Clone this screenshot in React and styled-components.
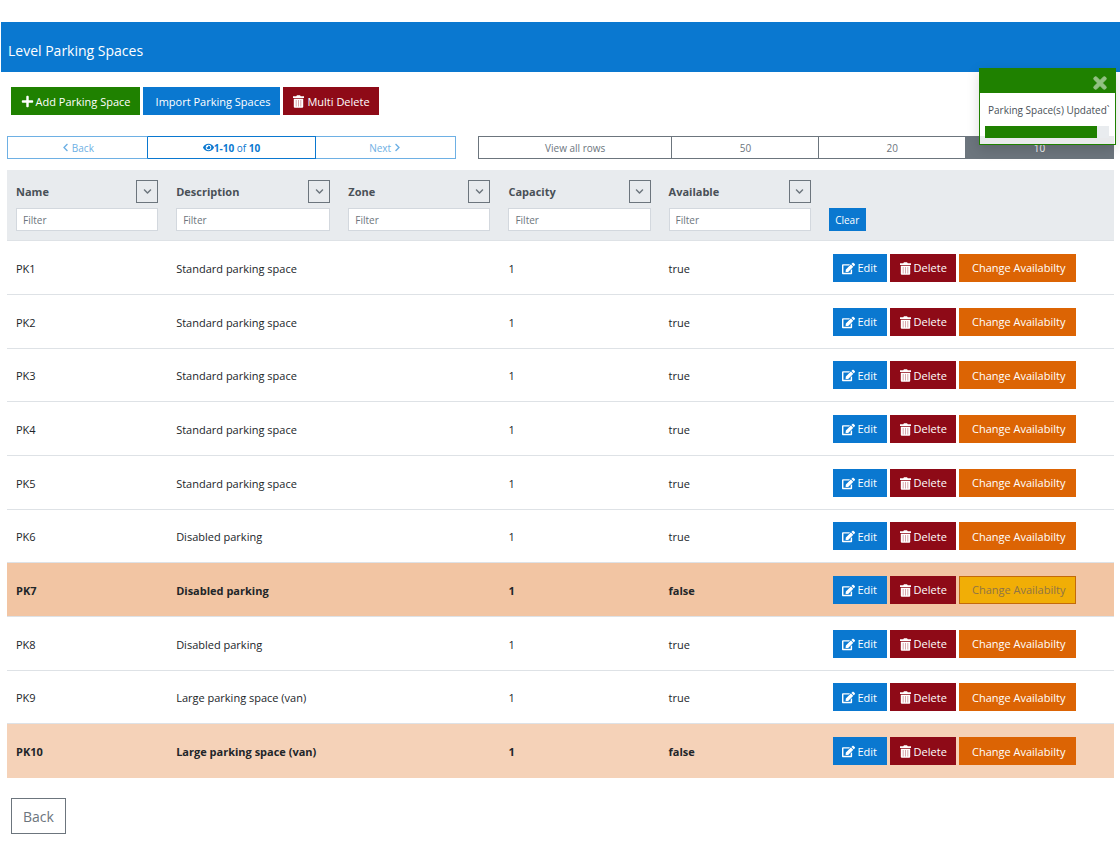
import React, { useState } from 'react';
import styled, { createGlobalStyle, css } from 'styled-components';
import {
	FaPlus,
	FaEdit,
	FaEye,
	FaChevronLeft,
	FaChevronRight,
	FaChevronDown,
	FaTimes,
} from 'react-icons/fa';

const colors = {
	blue: '#0a78d0',
	lightBlue: '#6eb0e4',
	green: '#1f8100',
	red: '#8e0a17',
	orange: '#dc6404',
	amber: '#f1ae06',
	grey: '#6c757d',
	header: '#e8ebee',
	border: '#dee2e6',
	text: '#212529',
};

const GlobalStyle = createGlobalStyle`
	*, *::before, *::after {
		box-sizing: border-box;
	}
	body {
		margin: 0;
		background: white;
		color: ${colors.text};
		font-family: 'Open Sans', 'Noto Sans', sans-serif;
		font-size: 11px;
		line-height: 16px;
	}
	button, input {
		font-family: inherit;
		margin: 0;
	}
`;

const Page = styled.div`
	padding-top: 22px;
`;

const TitleBar = styled.header`
	height: 50px;
	margin-left: 1px;
	padding: 19px 7px 0;
	background: ${colors.blue};
	color: white;
`;

const Title = styled.h1`
	margin: 0;
	font-size: 14px;
	line-height: 20px;
	font-weight: 400;
`;

const Content = styled.main`
	padding: 15px 6px 0 7px;
`;

const ButtonRow = styled.div`
	display: flex;
	gap: 3px;
	padding-left: ${({ $indent }) => $indent}px;
`;

const Button = styled.button`
	display: flex;
	align-items: center;
	justify-content: center;
	gap: 2px;
	width: ${({ $width }) => $width}px;
	height: 28px;
	padding: ${({ $labelOnly }) => ($labelOnly ? '1px 0 0 3px' : '1px 0 0')};
	border: 1px solid ${({ $color }) => $color};
	background: ${({ $color }) => $color};
	color: white;
	font-size: 11px;
	line-height: 16px;
	white-space: nowrap;
	svg {
		flex: none;
		font-size: 13px;
	}
	&:disabled {
		border-color: #c46a0a;
		background: ${colors.amber};
		color: #8f7446;
	}
`;

const Toolbar = styled.div`
	display: flex;
	gap: 22px;
	margin: 21px 0 11px;
`;

const Group = styled.div`
	display: flex;
	flex: ${({ $grow }) => $grow} 1 0;
`;

const GroupButton = styled.button`
	display: flex;
	align-items: center;
	justify-content: center;
	gap: ${({ $gap }) => $gap || 0}px;
	flex: ${({ $grow }) => $grow} 1 0;
	height: 23px;
	padding: 0;
	border: 1px solid ${colors.grey};
	background: white;
	color: ${colors.grey};
	font-size: 10px;
	line-height: 14px;
	& + & {
		border-left-width: 0;
	}
	${({ $active }) =>
		$active &&
		css`
			background: ${colors.grey};
			color: white;
		`}
`;

const PagerButton = styled(GroupButton)`
	border-color: ${colors.blue};
	color: ${colors.blue};
	white-space: pre;
	svg {
		font-size: 11px;
	}
	&:disabled {
		border-color: ${colors.lightBlue};
		color: ${colors.lightBlue};
		svg {
			font-size: 9px;
		}
	}
	&:first-child {
		border-right-color: ${colors.blue};
	}
`;

const Table = styled.table`
	width: 100%;
	table-layout: fixed;
	border-collapse: separate;
	border-spacing: 0;
`;

const HeadCell = styled.th`
	padding: 10px 9px 9px;
	border-bottom: 1px solid ${colors.border};
	background: ${colors.header};
	color: #495057;
	text-align: left;
	vertical-align: bottom;
	font-weight: 700;
`;

const HeadLabel = styled.div`
	display: flex;
	align-items: center;
	justify-content: space-between;
	margin-bottom: 5px;
`;

const SortButton = styled.button`
	display: flex;
	align-items: center;
	justify-content: center;
	width: 22px;
	height: 23px;
	padding: 0;
	border: 1px solid ${colors.grey};
	background: transparent;
	color: ${colors.grey};
	font-size: 9px;
`;

const Filter = styled.input`
	display: block;
	width: 100%;
	height: 23px;
	padding: 0 6px;
	border: 1px solid #d3d8de;
	border-radius: 0;
	background: white;
	color: ${colors.text};
	font-size: 10px;
	&::placeholder {
		color: ${colors.grey};
		opacity: 1;
	}
`;

const ClearButton = styled(Button)`
	height: 23px;
	padding: 0;
	font-size: 10px;
`;

const Row = styled.tr`
	height: 54px;
	&:nth-child(3n) {
		height: 53px;
	}
	${({ $unavailable }) =>
		$unavailable &&
		css`
			background: #f5d2b8;
			font-weight: 700;
		`}
	${({ $busy }) =>
		$busy &&
		css`
			background: #f2c5a3;
		`}
`;

const Cell = styled.td`
	padding: 2px 9px 0;
	border-bottom: 1px solid ${colors.border};
	vertical-align: middle;
	${Row}:last-child & {
		border-bottom: 0;
	}
`;

const ActionsCell = styled(Cell)`
	padding-top: 0;
`;

const Footer = styled.footer`
	padding: 20px 4px;
`;

const BackButton = styled.button`
	width: 55px;
	height: 36px;
	padding: 1px 0 0;
	border: 1px solid ${colors.grey};
	background: white;
	color: ${colors.grey};
	font-size: 14px;
	line-height: 20px;
`;

const Toast = styled.div`
	position: absolute;
	top: 68px;
	right: 4px;
	width: 137px;
	border: 1px solid ${colors.green};
	background: rgba(255, 255, 255, 0.85);
	box-shadow: 0 4px 12px rgba(0, 0, 0, 0.15);
`;

const ToastHeader = styled.div`
	display: flex;
	align-items: center;
	justify-content: flex-end;
	height: 24px;
	padding: 3px 6px 0;
	background: ${colors.green};
`;

const ToastClose = styled.button`
	display: flex;
	padding: 0;
	border: 0;
	background: none;
	color: #92c183;
	font-size: 18px;
	svg {
		stroke: currentColor;
		stroke-width: 30;
	}
`;

const ToastBody = styled.div`
	padding: 10px 6px 6px 5px;
	color: #495057;
	font-size: 10px;
	line-height: 14px;
	white-space: nowrap;
`;

const ToastText = styled.div`
	padding: 0 3px;
	margin-bottom: 9px;
`;

const Progress = styled.div`
	height: 12px;
	background: #e9ecef;
`;

const ProgressBar = styled.div`
	height: 100%;
	background: ${colors.green};
`;

const columns = [
	{ title: 'Name', width: 160 },
	{ title: 'Description', width: 172 },
	{ title: 'Zone', width: 160 },
	{ title: 'Capacity', width: 160 },
	{ title: 'Available', width: 160 },
];

const standard = 'Standard parking space';
const disabled = 'Disabled parking';
const large = 'Large parking space (van)';

const spaces = [
	{ name: 'PK1', description: standard, available: true },
	{ name: 'PK2', description: standard, available: true },
	{ name: 'PK3', description: standard, available: true },
	{ name: 'PK4', description: standard, available: true },
	{ name: 'PK5', description: standard, available: true },
	{ name: 'PK6', description: disabled, available: true },
	{ name: 'PK7', description: disabled, available: false, busy: true },
	{ name: 'PK8', description: disabled, available: true },
	{ name: 'PK9', description: large, available: true },
	{ name: 'PK10', description: large, available: false },
];

const TrashIcon = () => (
	<svg width="13" height="13" viewBox="0 0 13 13" aria-hidden="true">
		<path fill="currentColor" d="M1 1.2h3.2L5 .3h3l.8.9H12v1.9H1z" />
		<path fill="currentColor" d="M1.8 3.8h9.4v8q0 1-1 1H2.8q-1 0-1-1z" />
		<path
			stroke={colors.red}
			strokeOpacity="0.45"
			strokeWidth="0.8"
			d="M4.2 5v6.5M6.5 5v6.5M8.8 5v6.5"
		/>
	</svg>
);

const Notification = ({ progress, onClose }) => (
	<Toast role="status">
		<ToastHeader>
			<ToastClose type="button" aria-label="Close" onClick={onClose}>
				<FaTimes />
			</ToastClose>
		</ToastHeader>
		<ToastBody>
			<ToastText>Parking Space(s) Updated`</ToastText>
			<Progress>
				<ProgressBar style={{ width: `${progress}%` }} />
			</Progress>
		</ToastBody>
	</Toast>
);

const SpaceRow = ({ space }) => (
	<Row $unavailable={!space.available} $busy={space.busy}>
		<Cell>{space.name}</Cell>
		<Cell>{space.description}</Cell>
		<Cell />
		<Cell>1</Cell>
		<Cell>{String(space.available)}</Cell>
		<ActionsCell>
			<ButtonRow $indent={4}>
				<Button type="button" $color={colors.blue} $width={54}>
					<FaEdit />
					Edit
				</Button>
				<Button type="button" $color={colors.red} $width={66}>
					<TrashIcon />
					Delete
				</Button>
				<Button
					type="button"
					$color={colors.orange}
					$width={117}
					$labelOnly
					disabled={space.busy}
				>
					Change Availabilty
				</Button>
			</ButtonRow>
		</ActionsCell>
	</Row>
);

export default function App() {
	let [showToast, setShowToast] = useState(true);

	return (
		<>
			<GlobalStyle />
			<Page>
				<TitleBar>
					<Title>Level Parking Spaces</Title>
				</TitleBar>
				<Content>
					<ButtonRow $indent={4}>
						<Button type="button" $color={colors.green} $width={129}>
							<FaPlus />
							Add Parking Space
						</Button>
						<Button type="button" $color={colors.blue} $width={137} $labelOnly>
							Import Parking Spaces
						</Button>
						<Button type="button" $color={colors.red} $width={96}>
							<TrashIcon />
							Multi Delete
						</Button>
					</ButtonRow>

					<Toolbar>
						<Group $grow={449}>
							<PagerButton type="button" $grow={140} $gap={2} disabled>
								<FaChevronLeft />
								Back
							</PagerButton>
							<PagerButton type="button" $grow={169}>
								<FaEye />
								<b>1-10</b> of <b>10</b>
							</PagerButton>
							<PagerButton type="button" $grow={140} $gap={2} disabled>
								Next
								<FaChevronRight />
							</PagerButton>
						</Group>
						<Group $grow={636}>
							<GroupButton type="button" $grow={194}>
								View all rows
							</GroupButton>
							<GroupButton type="button" $grow={147}>
								50
							</GroupButton>
							<GroupButton type="button" $grow={147}>
								20
							</GroupButton>
							<GroupButton type="button" $grow={148} $active>
								10
							</GroupButton>
						</Group>
					</Toolbar>

					<Table>
						<colgroup>
							{columns.map(({ title, width }) => (
								<col key={title} width={width} />
							))}
							<col width={294} />
						</colgroup>
						<thead>
							<tr>
								{columns.map(({ title }) => (
									<HeadCell key={title} scope="col">
										<HeadLabel>
											{title}
											<SortButton type="button" aria-label={`Sort by ${title}`}>
												<FaChevronDown />
											</SortButton>
										</HeadLabel>
										<Filter placeholder="Filter" aria-label={`Filter ${title}`} />
									</HeadCell>
								))}
								<HeadCell>
									<ClearButton type="button" $color={colors.blue} $width={37}>
										Clear
									</ClearButton>
								</HeadCell>
							</tr>
						</thead>
						<tbody>
							{spaces.map(space => (
								<SpaceRow key={space.name} space={space} />
							))}
						</tbody>
					</Table>

					<Footer>
						<BackButton type="button">Back</BackButton>
					</Footer>
				</Content>
			</Page>
			{showToast && (
				<Notification progress={90} onClose={() => setShowToast(false)} />
			)}
		</>
	);
}
